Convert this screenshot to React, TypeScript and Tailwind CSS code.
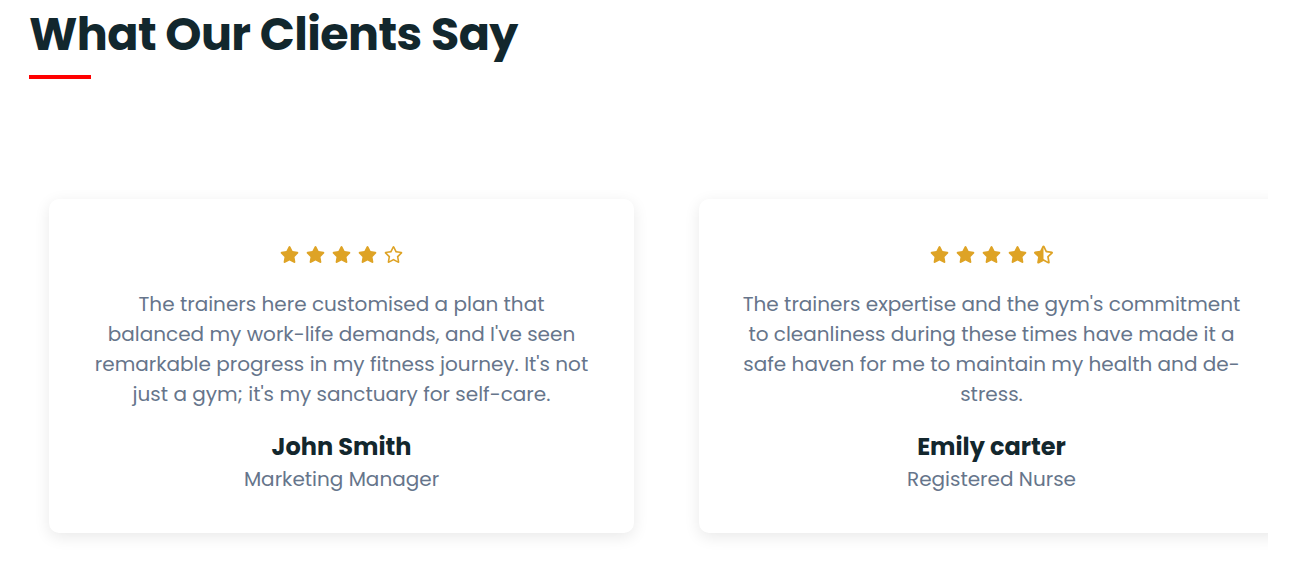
import React from "react";
import { FaStar, FaRegStar, FaStarHalfAlt } from "react-icons/fa";

type T = { rating: number; lines: string[]; name: string; role: string };

const data: T[] = [
  {
    rating: 4,
    lines: [
      "The trainers here customised a plan that",
      "balanced my work-life demands, and I've seen",
      "remarkable progress in my fitness journey. It's not",
      "just a gym; it's my sanctuary for self-care.",
    ],
    name: "John Smith",
    role: "Marketing Manager",
  },
  {
    rating: 4.5,
    lines: [
      "The trainers expertise and the gym's commitment",
      "to cleanliness during these times have made it a",
      "safe haven for me to maintain my health and de-",
      "stress.",
    ],
    name: "Emily carter",
    role: "Registered Nurse",
  },
];

function Stars({ rating }: { rating: number }) {
  const items = [];
  for (let i = 1; i <= 5; i++) {
    if (rating >= i) items.push(<FaStar key={i} size={19} />);
    else if (rating >= i - 0.5) items.push(<FaStarHalfAlt key={i} size={19} />);
    else items.push(<FaRegStar key={i} size={19} />);
  }
  return <div className="flex justify-center items-center gap-[7px] h-[17px] text-[#dea325]">{items}</div>;
}

function Card({ t }: { t: T }) {
  return (
    <div className="w-[585px] h-[334px] shrink-0 bg-white rounded-[10px] shadow-[0_4px_16px_rgba(0,0,0,0.09)] pt-[47px] flex flex-col items-center text-center">
      <Stars rating={t.rating} />
      <p className="mt-[26px] text-[20px] leading-[30px] text-[#66758b]">
        {t.lines.map((l, i) => (
          <span key={i} className="block whitespace-nowrap">{l}</span>
        ))}
      </p>
      <div className="mt-[21px] text-[24px] leading-[33px] font-bold text-[#13272d]">{t.name}</div>
      <div className="mt-[3px] text-[20px] leading-[27px] text-[#66758b]">{t.role}</div>
    </div>
  );
}

export default function App() {
  return (
    <div
      className="w-[1297px] h-[582px] bg-white px-[29px] overflow-hidden"
      style={{ fontFamily: "Poppins, Inter, 'Noto Sans', sans-serif" }}
    >
      <h2 className="pt-[6px] text-[46px] leading-[56px] font-bold text-[#12272d] tracking-[-0.55px]">
        What Our Clients Say
      </h2>
      <div className="mt-[13px] w-[62px] h-[4px] bg-[#ff0000]" />
      <div className="mt-[100px] overflow-hidden">
        <div className="flex gap-[65px] px-[20px] pt-[20px] pb-[20px]">
          {data.map((t, i) => (
            <Card key={i} t={t} />
          ))}
        </div>
      </div>
    </div>
  );
}
